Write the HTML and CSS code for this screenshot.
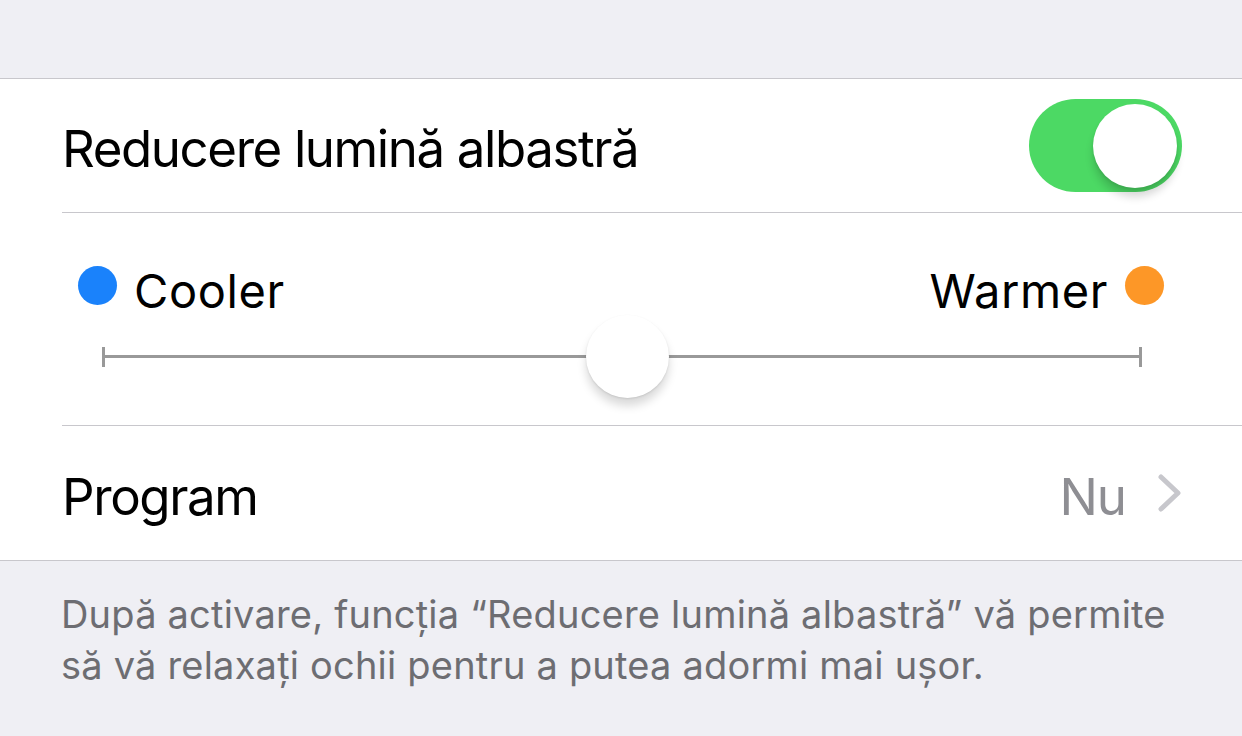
FILE: index.html
```html
<!DOCTYPE html>
<html lang="ro">
<head>
    <meta charset="UTF-8">
    <meta name="viewport" content="width=device-width, initial-scale=1.0">
    <title>Reducere lumină albastră</title>
    <link rel="stylesheet" href="styles.css">
</head>
<body>

    <div class="top-space"></div>

    <div class="group">
        <div class="row row-switch">
            <span class="row-title">Reducere lumină albastră</span>
            <div class="switch on">
                <div class="switch-knob"></div>
            </div>
        </div>

        <div class="row row-slider">
            <div class="slider-labels">
                <div class="label-side">
                    <span class="dot dot-cool"></span>
                    <span class="label-text">Cooler</span>
                </div>
                <div class="label-side">
                    <span class="label-text">Warmer</span>
                    <span class="dot dot-warm"></span>
                </div>
            </div>
            <div class="slider">
                <div class="track">
                    <span class="tick"></span>
                    <span class="line"></span>
                    <span class="tick"></span>
                </div>
                <div class="thumb"></div>
            </div>
        </div>

        <div class="row row-last">
            <span class="row-title">Program</span>
            <div class="row-detail">
                <span class="detail-value">Nu</span>
                <svg class="chevron" width="24" height="38" viewBox="0 0 24 38">
                    <polyline points="3,3 20,19 3,35" fill="none" stroke="#c7c7cc" stroke-width="5" stroke-linecap="round" stroke-linejoin="round"/>
                </svg>
            </div>
        </div>
    </div>

    <p class="footer-note">După activare, funcția “Reducere lumină albastră” vă permite să vă relaxați ochii pentru a putea adormi mai ușor.</p>

</body>
</html>
```

FILE: styles.css
```css
body {
    font-family: Inter, "Noto Sans", sans-serif;
    background-color: #efeff4;
    margin: 0;
    color: #000;
}
.top-space {
    height: 78px;
    border-bottom: 1px solid #c8c7cc;
}
.group {
    background: #fff;
    border-bottom: 1px solid #c8c7cc;
}
.row {
    margin-left: 62px;
    border-bottom: 1px solid #c8c7cc;
}
.row-last {
    border-bottom: none;
}
.row-switch,
.row-last {
    display: flex;
    align-items: center;
    justify-content: space-between;
    height: 133px;
    padding-right: 60px;
}
.row-last {
    height: 134px;
}
.row-title {
    font-size: 51px;
    letter-spacing: -1.4px;
    padding-top: 6px;
}

/* switch */
.switch {
    width: 153px;
    height: 93px;
    border-radius: 47px;
    background: #4cd964;
    display: flex;
    align-items: center;
    justify-content: flex-end;
    padding-right: 5px;
    box-sizing: border-box;
}
.switch-knob {
    width: 84px;
    height: 84px;
    border-radius: 50%;
    background: #fff;
    box-shadow: 0 9px 8px rgba(0,0,0,0.16), 0 2px 3px rgba(0,0,0,0.08);
}

/* slider row */
.row-slider {
    height: 213px;
    display: flex;
    flex-direction: column;
    padding-top: 48px;
    box-sizing: border-box;
}
.slider-labels {
    display: flex;
    justify-content: space-between;
    align-items: flex-start;
    margin-left: 16px;
    margin-right: 78px;
    font-size: 47px;
    letter-spacing: 0.6px;
    line-height: 48px;
}
.label-side {
    display: flex;
    align-items: flex-start;
    gap: 17px;
}
.label-text {
    padding-top: 6px;
}
.dot {
    width: 39px;
    height: 39px;
    margin-top: 5px;
    border-radius: 50%;
    display: inline-block;
}
.dot-cool {
    background: #1a82fb;
}
.dot-warm {
    background: #fd9727;
}
.slider {
    position: relative;
    height: 83px;
    margin-left: 40px;
    margin-right: 100px;
}
.track {
    height: 100%;
    display: flex;
    align-items: center;
}
.tick {
    width: 3px;
    height: 20px;
    background: #999;
}
.line {
    flex: 1;
    height: 3px;
    background: #999;
}
.thumb {
    position: absolute;
    top: 0;
    left: 484px;
    width: 83px;
    height: 83px;
    border-radius: 50%;
    background: #fff;
    box-shadow: 0 8px 10px rgba(0,0,0,0.15), 0 1px 2px rgba(0,0,0,0.1);
}

/* detail */
.row-detail {
    display: flex;
    align-items: center;
    gap: 32px;
}
.detail-value {
    font-size: 51px;
    letter-spacing: -1px;
    color: #8e8e93;
    padding-top: 6px;
}
.chevron {
    display: block;
}

.footer-note {
    margin: 0;
    padding: 28px 40px 0 61px;
    font-size: 38px;
    line-height: 51px;
    color: #6d6d72;
    letter-spacing: 0.2px;
}
```
